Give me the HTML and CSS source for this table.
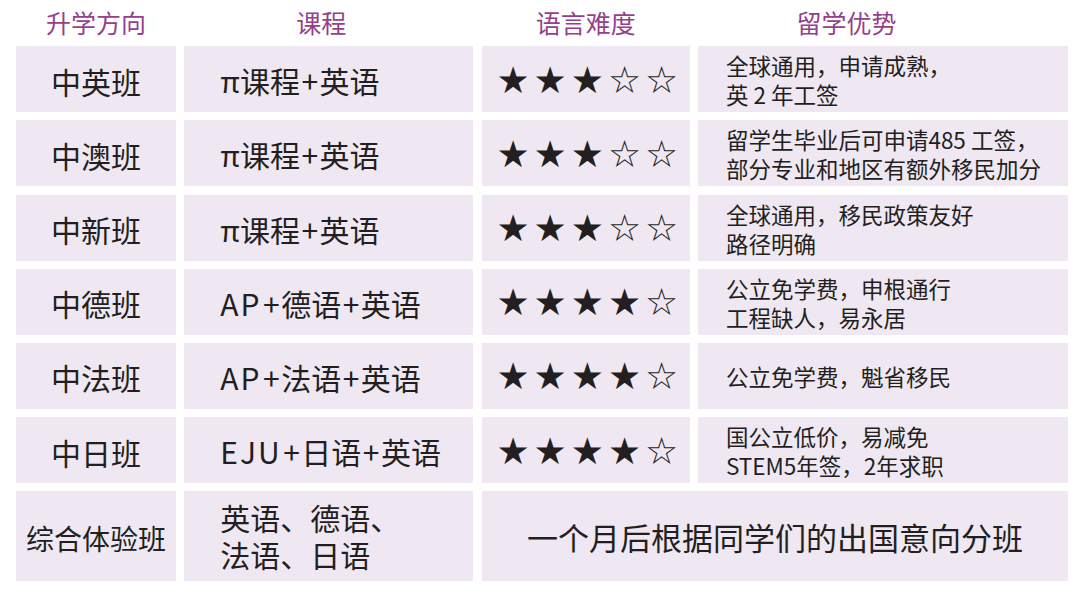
FILE: index.html
```html
<!DOCTYPE html>
<html lang="zh-CN">
<head>
<meta charset="utf-8">
<title>升学方向</title>
<link rel="stylesheet" href="styles.css">
</head>
<body>
<div class="table">
  <div class="th">升学方向</div>
  <div class="th th-course">课程</div>
  <div class="th">语言难度</div>
  <div class="th th-adv">留学优势</div>

  <div class="cell c1">中英班</div>
  <div class="cell c2">π课程<span class="plus">+</span>英语</div>
  <div class="cell c3"><span class="stars">★★★☆☆</span></div>
  <div class="cell c4">全球通用，申请成熟，<br>英 2 年工签</div>

  <div class="cell c1">中澳班</div>
  <div class="cell c2">π课程<span class="plus">+</span>英语</div>
  <div class="cell c3"><span class="stars">★★★☆☆</span></div>
  <div class="cell c4">留学生毕业后可申请485 工签，<br>部分专业和地区有额外移民加分</div>

  <div class="cell c1">中新班</div>
  <div class="cell c2">π课程<span class="plus">+</span>英语</div>
  <div class="cell c3"><span class="stars">★★★☆☆</span></div>
  <div class="cell c4">全球通用，移民政策友好<br>路径明确</div>

  <div class="cell c1">中德班</div>
  <div class="cell c2"><span class="lat">AP</span><span class="plus">+</span>德语<span class="plus">+</span>英语</div>
  <div class="cell c3"><span class="stars">★★★★☆</span></div>
  <div class="cell c4">公立免学费，申根通行<br>工程缺人，易永居</div>

  <div class="cell c1">中法班</div>
  <div class="cell c2"><span class="lat">AP</span><span class="plus">+</span>法语<span class="plus">+</span>英语</div>
  <div class="cell c3"><span class="stars">★★★★☆</span></div>
  <div class="cell c4">公立免学费，魁省移民</div>

  <div class="cell c1">中日班</div>
  <div class="cell c2"><span class="lat">EJU</span><span class="plus">+</span>日语<span class="plus">+</span>英语</div>
  <div class="cell c3"><span class="stars">★★★★☆</span></div>
  <div class="cell c4">国公立低价，易减免<br>STEM5年签，2年求职</div>

  <div class="cell c1 c1-small">综合体验班</div>
  <div class="cell c2 c2-two"><div class="ln">英语、德语、</div><div class="ln">法语、日语</div></div>
  <div class="cell merged">一个月后根据同学们的出国意向分班</div>
</div>
</body>
</html>
```

FILE: styles.css
```css
html, body {
  margin: 0;
  padding: 0;
  background: #ffffff;
}

body {
  font-family: "Noto Sans CJK SC", "Noto Sans", sans-serif;
  color: #231f20;
  width: 1080px;
  height: 590px;
  overflow: hidden;
}

.table {
  display: grid;
  grid-template-columns: 160px 289px 208.5px 370px;
  grid-template-rows: 38px repeat(6, 66px) 90px;
  column-gap: 8.3px;
  row-gap: 8.2px;
  padding-left: 16px;
}

.th {
  display: flex;
  align-items: center;
  justify-content: center;
  padding-top: 6px;
  font-size: 25px;
  color: #963f8b;
  line-height: 1;
}

.th-course {
  padding-right: 15px;
}

.th-adv {
  padding-right: 74px;
}

.cell {
  background: #efe8f2;
  display: flex;
  align-items: center;
  box-sizing: border-box;
}

.c1 {
  justify-content: center;
  font-size: 30px;
  padding-top: 3px;
}

.c1-small {
  font-size: 28px;
}

.c2 {
  padding-left: 36px;
  font-size: 30px;
  padding-top: 2px;
}

.lat {
  letter-spacing: 2px;
}

.plus {
  padding: 0 1.5px;
}

.c2-two {
  flex-direction: column;
  align-items: flex-start;
  justify-content: center;
  padding-top: 0;
}

.ln {
  height: 37px;
  line-height: 37px;
}

.c3 {
  justify-content: center;
}

.stars {
  font-family: "DejaVu Sans", sans-serif;
  font-size: 37px;
  letter-spacing: 4px;
  margin-right: -4px;
  margin-left: 3px;
  line-height: 1;
  padding-top: 2px;
}

.c4 {
  padding-left: 27.5px;
  font-size: 22.5px;
  line-height: 29px;
  padding-top: 2px;
}

.merged {
  grid-column: 3 / 5;
  justify-content: center;
  font-size: 31px;
}
```
